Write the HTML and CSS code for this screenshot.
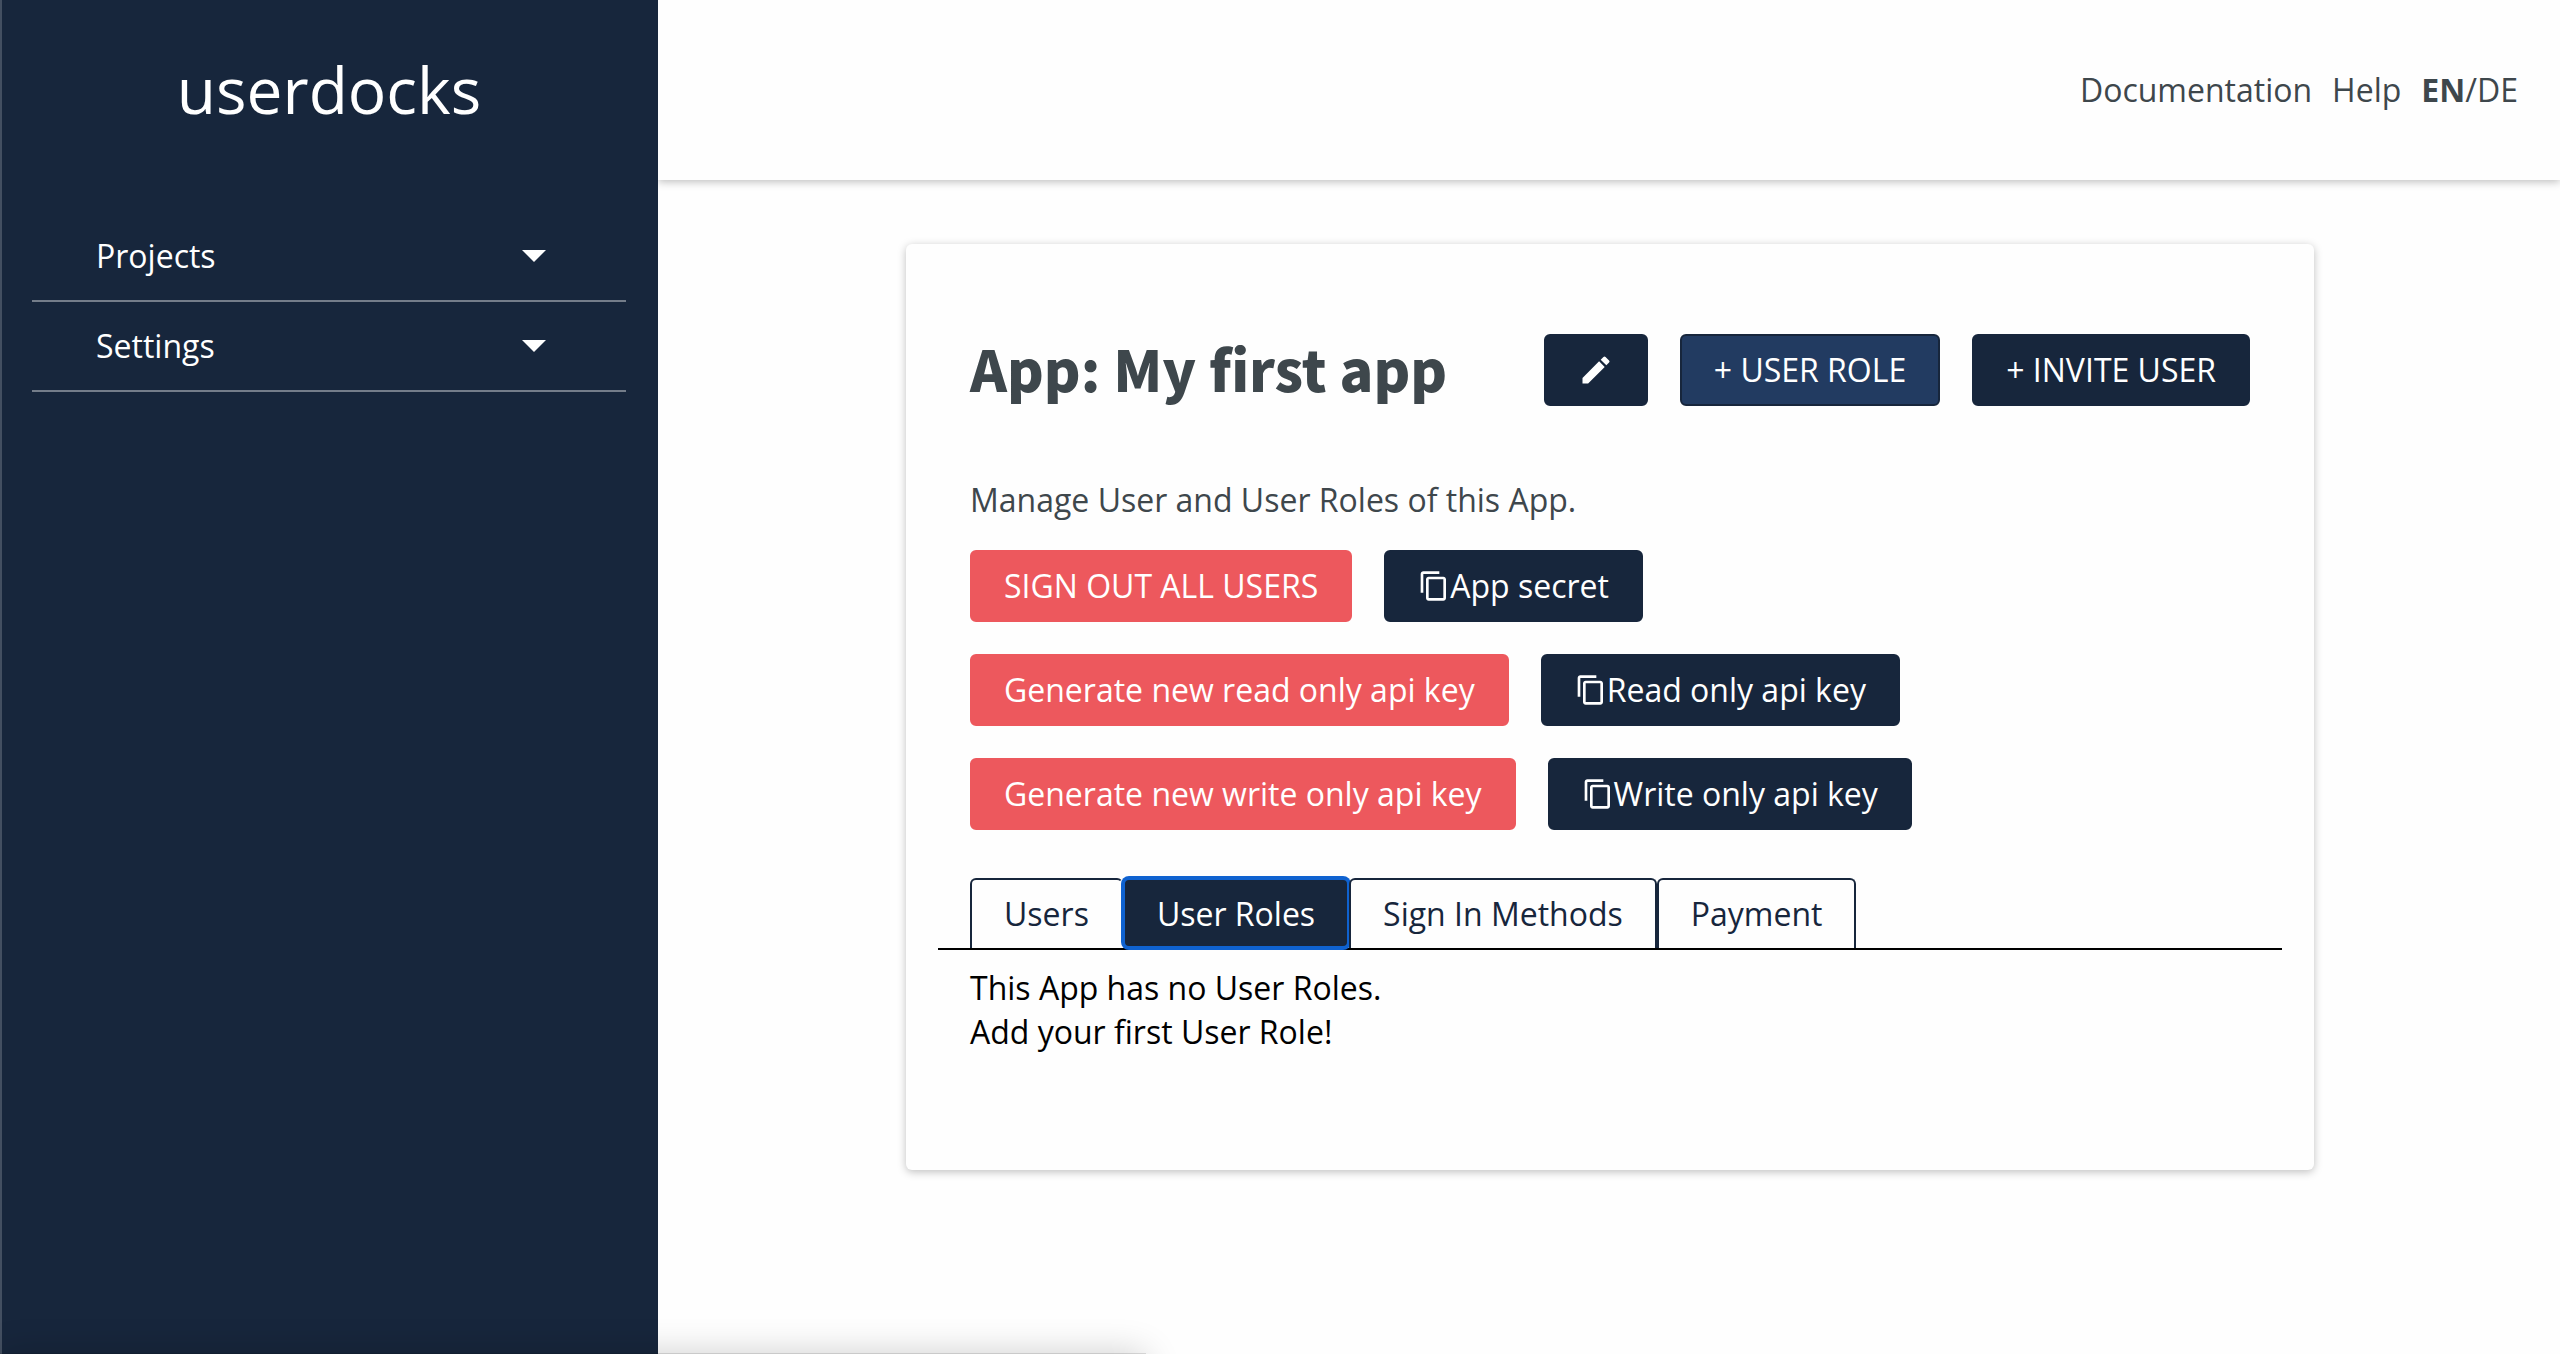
FILE: index.html
```html
<!DOCTYPE html>
<html lang="en">
<head>
<meta charset="utf-8">
<title>userdocks</title>
<meta name="viewport" content="width=device-width, initial-scale=1">
<link rel="stylesheet" href="styles.css">
</head>
<body>
<svg class="sprite" aria-hidden="true">
  <symbol id="copy" viewBox="0 0 24 24"><path d="M16 1H4c-1.100 0-2 .900-2 2v14h2V3h12V1zm3 4H8c-1.100 0-2 .900-2 2v14c0 1.100.900 2 2 2h11c1.100 0 2-.900 2-2V7c0-1.100-.900-2-2-2zm0 16H8V7h11v14z"/></symbol>
  <symbol id="pencil" viewBox="0 0 24 24"><path d="M3 17.250V21h3.750L17.810 9.940l-3.750-3.750L3 17.250zM20.710 7.040a1 1 0 0 0 0-1.410l-2.340-2.340a1 1 0 0 0-1.410 0l-1.830 1.830 3.750 3.750 1.830-1.830z"/></symbol>
  <symbol id="caret" viewBox="0 0 24 12"><path d="M0 0h24L12 12z"/></symbol>
</svg>
<div class="layout">
  <aside class="sidebar">
    <div class="brand">userdocks</div>
    <nav class="menu" aria-label="Main">
      <button class="menu-item" type="button">Projects<svg class="caret" aria-hidden="true"><use href="#caret"/></svg></button>
      <button class="menu-item" type="button">Settings<svg class="caret" aria-hidden="true"><use href="#caret"/></svg></button>
    </nav>
  </aside>
  <div class="page">
    <header class="topbar">
      <a href="#">Documentation</a>
      <a href="#">Help</a>
      <a href="#"><b>EN</b>/DE</a>
    </header>
    <main class="content">
      <section class="card">
        <div class="card-head">
          <h1 class="title">App: My first app</h1>
          <div class="actions">
            <button class="btn" type="button" aria-label="Edit"><svg class="pencil" aria-hidden="true"><use href="#pencil"/></svg></button>
            <button class="btn btn-hover" type="button">+ USER ROLE</button>
            <button class="btn" type="button">+ INVITE USER</button>
          </div>
        </div>
        <p class="lead">Manage User and User Roles of this App.</p>
        <div class="keys">
          <div class="key-row">
            <button class="btn btn-danger" type="button">SIGN OUT ALL USERS</button>
            <button class="btn" type="button"><svg class="copy" aria-hidden="true"><use href="#copy"/></svg>App secret</button>
          </div>
          <div class="key-row">
            <button class="btn btn-danger" type="button">Generate new read only api key</button>
            <button class="btn" type="button"><svg class="copy" aria-hidden="true"><use href="#copy"/></svg>Read only api key</button>
          </div>
          <div class="key-row">
            <button class="btn btn-danger" type="button">Generate new write only api key</button>
            <button class="btn" type="button"><svg class="copy" aria-hidden="true"><use href="#copy"/></svg>Write only api key</button>
          </div>
        </div>
        <div class="tabs" role="tablist">
          <button class="tab" role="tab" type="button">Users</button>
          <button class="tab tab-active" role="tab" type="button" aria-selected="true">User Roles</button>
          <button class="tab" role="tab" type="button">Sign In Methods</button>
          <button class="tab" role="tab" type="button">Payment</button>
        </div>
        <div class="empty">
          <p>This App has no User Roles.</p>
          <p>Add your first User Role!</p>
        </div>
      </section>
    </main>
  </div>
</div>
<div class="drawer" aria-hidden="true"></div>
</body>
</html>
```
FILE: styles.css
```css
:root {
  --navy: #17263c;
  --navy-light: #223b61;
  --red: #ed585d;
  --text: #3e474c;
  --surface: #fefefe;
  --focus: #0f62d0;
}

* { box-sizing: border-box; }

body {
  margin: 0;
  background: var(--surface);
  color: var(--text);
  font: 32px/44px "Open Sans", sans-serif;
}

button { font: inherit; cursor: pointer; }
a { color: inherit; text-decoration: none; }
p, h1 { margin: 0; }
svg { fill: currentColor; }
.sprite { display: none; }

.layout { display: flex; min-height: 100vh; }

.sidebar {
  flex: 0 0 658px;
  padding: 0 32px 0 30px;
  border-left: 2px solid #434f61;
  background: var(--navy);
  color: #fff;
  z-index: 1;
}

.brand {
  padding: 46px 0;
  font-size: 64px;
  line-height: 88px;
  text-align: center;
}

.menu { padding-top: 32px; }

.menu-item {
  display: flex;
  align-items: center;
  justify-content: space-between;
  width: 100%;
  padding: 22px 80px 22px 64px;
  border: 0;
  border-bottom: 2px solid #747d8a;
  background: none;
  color: inherit;
}

.caret { width: 24px; height: 12px; }

.page { flex: 1; min-width: 0; }

.topbar {
  display: flex;
  align-items: center;
  justify-content: flex-end;
  gap: 20px;
  height: 180px;
  padding: 0 42px;
  background: var(--surface);
  box-shadow: 0 2px 8px rgba(0, 0, 0, .25);
}

.content { padding: 64px 32px 64px 34px; }

.card {
  max-width: 1408px;
  margin: 0 auto;
  padding: 90px 64px 116px;
  border-radius: 6px;
  background: var(--surface);
  box-shadow: 0 2px 8px rgba(0, 0, 0, .25);
}

.card-head {
  display: flex;
  align-items: flex-start;
  justify-content: space-between;
}

.title {
  font: 900 56px/68px "Noto Sans CJK SC", sans-serif;
}

.actions, .key-row { display: flex; gap: 32px; }

.btn {
  display: flex;
  align-items: center;
  padding: 12px 32px;
  border: 2px solid var(--navy);
  border-radius: 6px;
  background: var(--navy);
  color: #fff;
}

.btn-hover { background: var(--navy-light); }
.btn-danger { border-color: var(--red); background: var(--red); }

.pencil { width: 36px; height: 36px; }
.copy { width: 32px; height: 32px; }

.lead { padding: 72px 0 28px; }

.keys { display: grid; gap: 32px; }

.tabs {
  display: flex;
  margin: 48px -32px 16px;
  padding: 0 32px;
  border-bottom: 2px solid #000;
}

.tab {
  padding: 12px 32px;
  border: 2px solid var(--navy);
  border-bottom: 0;
  border-radius: 6px 6px 0 0;
  background: var(--surface);
  color: var(--navy);
}

.tab:first-child { border-right-color: transparent; }

.tab-active {
  padding-bottom: 10px;
  border: 2px solid var(--focus);
  border-radius: 6px;
  background: var(--navy);
  color: #fff;
  box-shadow: 0 0 0 2px var(--focus);
}

.empty { color: #000; }

.drawer {
  position: fixed;
  top: 100%;
  left: 0;
  z-index: 2;
  width: 1145px;
  height: 44px;
  box-shadow: 0 0 0 1px rgba(0, 0, 0, .12), 0 0 36px rgba(0, 0, 0, .2);
}
```
